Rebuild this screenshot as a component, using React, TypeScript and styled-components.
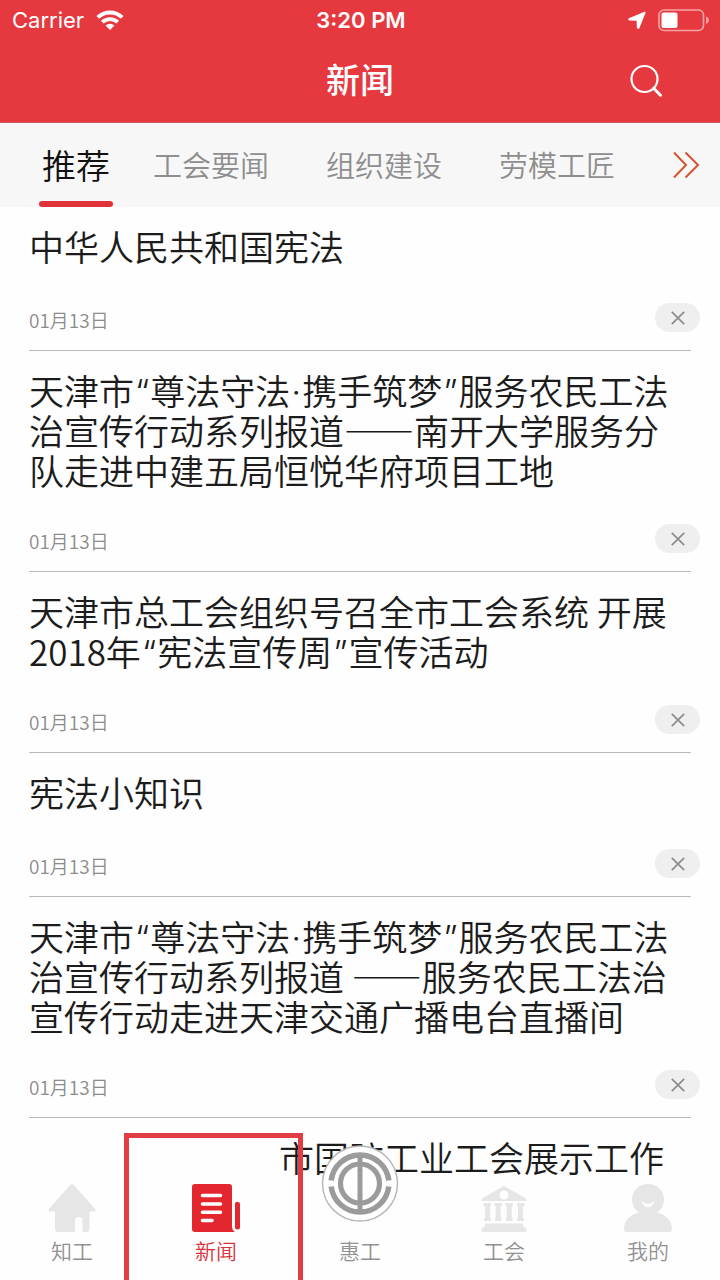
import React from 'react';
import styled, { createGlobalStyle, css } from 'styled-components';

const GlobalStyle = createGlobalStyle`
  * { box-sizing: border-box; }
  body {
    margin: 0;
    background: #fefefe;
    color: #1c1c1c;
    font-family: "Noto Sans CJK SC", sans-serif;
  }
  button {
    padding: 0;
    border: 0;
    background: none;
    color: inherit;
    font: inherit;
  }
`;

const Screen = styled.div`
  display: flex;
  flex-direction: column;
  height: 100vh;
  overflow: hidden;
`;

const Header = styled.header`
  flex: none;
  background: #e6393f;
  border-bottom: 1px solid #c95a62;
  color: #fff;
`;

const StatusBar = styled.div`
  display: grid;
  grid-template-columns: 1fr auto 1fr;
  align-items: center;
  height: 40px;
  padding: 0 10px 0 12px;
  font-family: Inter, sans-serif;
  font-size: 22px;
`;

const StatusGroup = styled.div<{ $end?: boolean }>`
  display: flex;
  align-items: center;
  gap: 12px;
  justify-content: ${(p) => (p.$end ? 'flex-end' : 'flex-start')};
`;

const Clock = styled.time`
  font-weight: 600;
`;

const TitleBar = styled.div`
  display: grid;
  grid-template-columns: 1fr auto 1fr;
  align-items: center;
  height: 82px;
  padding: 0 57px;
`;

const PageTitle = styled.h1`
  grid-column: 2;
  margin: 0;
  padding-bottom: 4px;
  font-size: 34px;
  font-weight: 500;
  line-height: 76px;
`;

const SearchButton = styled.button`
  justify-self: end;
  display: flex;
`;

const Channels = styled.nav`
  flex: none;
  display: flex;
  align-items: stretch;
  height: 84px;
  padding: 0 20px 0 39px;
  background: #f7f7f7;
`;

const Channel = styled.button<{ $active?: boolean }>`
  position: relative;
  flex: none;
  padding-bottom: 2px;
  white-space: nowrap;
  font-size: 29px;
  font-weight: 350;
  color: #8e8e8e;
  margin-right: 57px;
  ${(p) =>
    p.$active &&
    css`
      width: 74px;
      margin-right: 40px;
      font-size: 34px;
      color: #111;
      &::after {
        content: '';
        position: absolute;
        left: 0;
        right: 0;
        bottom: 0;
        height: 6px;
        border-radius: 3px;
        background: #e03238;
      }
    `}
`;

const MoreButton = styled.button`
  display: flex;
  align-items: center;
  margin-left: auto;
`;

const Feed = styled.main`
  flex: 1;
  min-height: 0;
  overflow: hidden;
`;

const Article = styled.article`
  display: flex;
  flex-direction: column;
  min-height: 144px;
  padding: 19px 20px 0 29px;
`;

const Headline = styled.h2<{ $indent?: boolean }>`
  margin: 0 9px 34px 0;
  padding-left: ${(p) => (p.$indent ? '250px' : '0')};
  font-size: 35px;
  font-weight: 350;
  line-height: 40px;
`;

const Mark = styled.span`
  margin: 0 1px;
  font-family: Inter, sans-serif;
  font-weight: 300;
  line-height: 1;
`;

const Meta = styled.div`
  display: flex;
  align-items: flex-end;
  justify-content: space-between;
  margin-top: auto;
`;

const Day = styled.time`
  font-size: 19px;
  font-weight: 350;
  line-height: 24px;
  color: #8c8c8c;
`;

const Dismiss = styled.button`
  display: flex;
  align-items: center;
  justify-content: center;
  width: 45px;
  height: 29px;
  border-radius: 15px;
  background: #efefef;
`;

const Divider = styled.hr`
  width: auto;
  height: 1px;
  margin: 18px 9px 0 0;
  border: 0;
  background: #b8b8b8;
`;

const TabBar = styled.nav`
  flex: none;
  display: grid;
  grid-template-columns: repeat(5, 1fr);
  height: 98px;
  background: #fefefe;
`;

const TabItem = styled.button<{ $active?: boolean }>`
  position: relative;
  display: flex;
  flex-direction: column;
  align-items: center;
  padding-top: 2px;
  font-size: 21px;
  font-weight: 350;
  line-height: 36px;
  color: ${(p) => (p.$active ? '#d8323a' : '#929292')};
`;

const IconSlot = styled.span`
  display: block;
  width: 48px;
  height: 48px;
`;

const Badge = styled.span`
  position: absolute;
  top: -37px;
  left: 50%;
  width: 78px;
  height: 78px;
  margin-left: -39px;
`;

const Highlight = styled.span`
  position: absolute;
  z-index: 1;
  top: -49px;
  left: -20px;
  right: -15px;
  bottom: -6px;
  border: 5px solid #e03e44;
  pointer-events: none;
`;

const WifiIcon = () => (
  <svg width="28" height="21" viewBox="0 0 28 21" fill="none" stroke="#fff" aria-hidden="true">
    <path d="M1.800 7.400 A17.400 17.400 0 0 1 26.200 7.400" strokeWidth="4" />
    <path d="M6.300 12.200 A11 11 0 0 1 21.700 12.200" strokeWidth="3.800" />
    <path d="M14 20 L9.600 15.600 A6.200 6.200 0 0 1 18.400 15.600 Z" fill="#fff" stroke="none" />
  </svg>
);

const LocationIcon = () => (
  <svg width="18" height="19" viewBox="0 0 18 19" aria-hidden="true">
    <path
      d="M16.800 1.500 L10.600 17 L9.600 16.500 L9.400 9 L1.200 8.800 L1.200 8 Z"
      fill="#fff"
      stroke="#fff"
      strokeWidth="1.600"
      strokeLinejoin="round"
    />
  </svg>
);

const BatteryIcon = () => (
  <svg width="52" height="23" viewBox="0 0 52 23" aria-hidden="true">
    <rect x="1" y="1" width="44.500" height="20.500" rx="5" fill="none" stroke="#f6a3a6" strokeWidth="1.600" />
    <rect x="3.500" y="3.500" width="16" height="15.500" rx="2" fill="#fff" />
    <path d="M48 7.500 Q51 8.500 51 11.300 Q51 14 48 15 Z" fill="#f09a9e" />
  </svg>
);

const SearchIcon = () => (
  <svg width="34" height="34" viewBox="0 0 34 34" fill="none" stroke="#fff" aria-hidden="true">
    <circle cx="15.500" cy="15" r="13" strokeWidth="2.200" />
    <path d="M24.600 24.300 L31.500 31.200" strokeWidth="3" strokeLinecap="round" />
  </svg>
);

const MoreIcon = () => (
  <svg width="28" height="28" viewBox="0 0 28 28" fill="none" stroke="#d8532f" strokeWidth="2" aria-hidden="true">
    <path d="M2 1.500 L14 14 L2 26.500 M13.500 1.500 L26 14 L13.500 26.500" />
  </svg>
);

const CloseIcon = () => (
  <svg width="14" height="14" viewBox="0 0 14 14" stroke="#8c8c8c" strokeWidth="1.700" aria-hidden="true">
    <path d="M0.800 0.800 L13.200 13.200 M13.200 0.800 L0.800 13.200" />
  </svg>
);

const HomeIcon = () => (
  <svg width="48" height="48" viewBox="0 0 48 48" fill="#e6e6e6" aria-hidden="true">
    <path d="M22.500 0.800 Q24 -0.400 25.500 0.800 L47.300 25.200 Q48 27.400 46 27.400 L41.500 27.400 L41.500 45 Q41.500 48 38.500 48 L34.500 48 L34.500 36 Q34.500 33 31 33 Q27 33 27 36 L27 48 L10 48 Q7 48 7 45 L7 27.400 L2 27.400 Q0 27.400 0.700 25.200 Z" />
  </svg>
);

const NewsIcon = () => (
  <svg width="48" height="48" viewBox="0 0 48 48" aria-hidden="true">
    <path d="M3 0 L37 0 Q40 0 40 3 L40 43 Q40 46 43 48 L3 48 Q0 48 0 45 L0 3 Q0 0 3 0 Z" fill="#e2282e" />
    <path d="M44.500 18 L46 18 Q48 18 48 20 L48 43 Q48 45.500 45.500 45.500 Q43 45.500 43 43 L43 19.500 Q43 18 44.500 18 Z" fill="#e2282e" />
    <path d="M10.500 11.500 H28.500 M10.500 20 H28.500 M10.500 28.300 H28.500 M10.500 36.500 H20" stroke="#fff" strokeWidth="3.600" strokeLinecap="round" />
  </svg>
);

const UnionEmblem = () => (
  <svg width="78" height="78" viewBox="0 0 78 78" fill="none" stroke="#9b9b9b" aria-hidden="true">
    <circle cx="39" cy="38.500" r="37.500" fill="#fff" stroke="#b5b5b5" strokeWidth="1.400" />
    <path d="M10.200 35.500 A29 29 0 0 1 67.800 35.500" strokeWidth="5.500" />
    <path d="M10.200 41.500 A29 29 0 0 0 67.800 41.500" strokeWidth="5.500" />
    <circle cx="39" cy="38.500" r="19.500" strokeWidth="5.200" />
    <path d="M39 8 V69" strokeWidth="5" />
  </svg>
);

const HallIcon = () => (
  <svg width="48" height="48" viewBox="0 0 48 48" fill="#e6e6e6" aria-hidden="true">
    <path fillRule="evenodd" d="M24 2 L46 14.500 V17 H2 V14.500 Z M24 6.500 A4.500 4.500 0 1 0 24 15.500 A4.500 4.500 0 1 0 24 6.500 Z" />
    <path d="M3.500 19 H11 V22 H10 V34 H11 V37 H4 V34 H5 V22 H3.500 Z M14.500 19 H22 V22 H20.700 V34 H21.500 V37 H15 V34 H15.700 V22 H14.500 Z M25.500 19 H33 V22 H31.700 V34 H32.500 V37 H26 V34 H26.700 V22 H25.500 Z M37 19 H44.500 V22 H43 V34 H44 V37 H37 V34 H38 V22 H37 Z" />
    <path d="M5 39.500 H43 V42 L46.500 45 V48 H1.500 V45 L5 42 Z" />
  </svg>
);

const PersonIcon = () => (
  <svg width="48" height="48" viewBox="0 0 48 48" aria-hidden="true">
    <path d="M24 0 C33 0 40 6.500 40 15.500 C40 21 37.500 25.500 33 28.500 C42 30.500 48 37 48 45 Q48 48 45 48 L3 48 Q0 48 0 45 C0 37 6 30.500 15 28.500 C10.500 25.500 8 21 8 15.500 C8 6.500 15 0 24 0 Z" fill="#e6e6e6" />
    <path d="M18 17.500 L20.500 19.500 Q24 21.500 27.500 19.500 L30 17.500 Q28 23 24 23 Q20 23 18 17.500 Z" fill="#fff" stroke="#fff" strokeWidth="1" strokeLinejoin="round" />
  </svg>
);

const channels = ['推荐', '工会要闻', '组织建设', '劳模工匠'];

const articles = [
  '中华人民共和国宪法',
  '天津市“尊法守法·携手筑梦”服务农民工法治宣传行动系列报道——南开大学服务分队走进中建五局恒悦华府项目工地',
  '天津市总工会组织号召全市工会系统 开展2018年“宪法宣传周”宣传活动',
  '宪法小知识',
  '天津市“尊法守法·携手筑梦”服务农民工法治宣传行动系列报道 ——服务农民工法治宣传行动走进天津交通广播电台直播间',
];

const tabs = [
  { label: '知工', Icon: HomeIcon },
  { label: '新闻', Icon: NewsIcon, active: true },
  { label: '惠工', Icon: UnionEmblem, raised: true },
  { label: '工会', Icon: HallIcon },
  { label: '我的', Icon: PersonIcon },
];

// Quotes and the middle dot take a proportional Latin face instead of the full-width one.
const withMarks = (text: string) =>
  text.split(/([“”·])/).map((part, i) => (i % 2 ? <Mark key={i}>{part}</Mark> : part));

export default function App() {
  return (
    <>
      <GlobalStyle />
      <Screen lang="zh-CN">
        <Header>
          <StatusBar>
            <StatusGroup>
              <span>Carrier</span>
              <WifiIcon />
            </StatusGroup>
            <Clock>3:20 PM</Clock>
            <StatusGroup $end>
              <LocationIcon />
              <BatteryIcon />
            </StatusGroup>
          </StatusBar>
          <TitleBar>
            <PageTitle>新闻</PageTitle>
            <SearchButton type="button" aria-label="搜索">
              <SearchIcon />
            </SearchButton>
          </TitleBar>
        </Header>
        <Channels>
          {channels.map((name, i) => (
            <Channel key={name} type="button" $active={i === 0}>
              {name}
            </Channel>
          ))}
          <MoreButton type="button" aria-label="更多">
            <MoreIcon />
          </MoreButton>
        </Channels>
        <Feed>
          {articles.map((title) => (
            <Article key={title}>
              <Headline>{withMarks(title)}</Headline>
              <Meta>
                <Day dateTime="01-13">01月13日</Day>
                <Dismiss type="button" aria-label="关闭">
                  <CloseIcon />
                </Dismiss>
              </Meta>
              <Divider />
            </Article>
          ))}
          <Article>
            <Headline $indent>市国防工业工会展示工作</Headline>
          </Article>
        </Feed>
        <TabBar>
          {tabs.map(({ label, Icon, active, raised }) => (
            <TabItem key={label} type="button" $active={active}>
              <IconSlot>
                {raised ? (
                  <Badge>
                    <Icon />
                  </Badge>
                ) : (
                  <Icon />
                )}
              </IconSlot>
              {label}
              {active && <Highlight />}
            </TabItem>
          ))}
        </TabBar>
      </Screen>
    </>
  );
}
